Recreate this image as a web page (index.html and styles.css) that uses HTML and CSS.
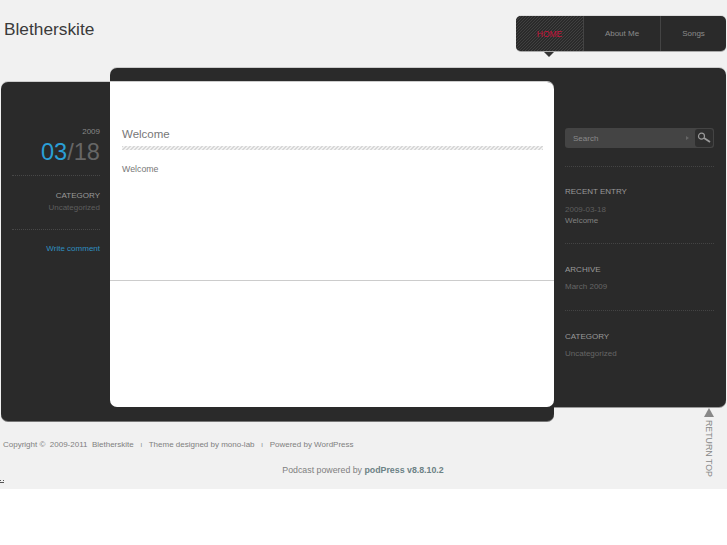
FILE: index.html
```html
<!DOCTYPE html>
<html lang="en">
<head>
    <meta charset="UTF-8">
    <meta name="viewport" content="width=device-width, initial-scale=1.0">
    <title>Bletherskite</title>
    <link rel="stylesheet" href="styles.css">
</head>
<body>
    <div class="page">
        <header class="header">
            <h1 class="site-title">Bletherskite</h1>
            <nav class="nav">
                <a class="nav-item active" href="#">HOME</a>
                <a class="nav-item about" href="#">About Me</a>
                <a class="nav-item songs" href="#">Songs</a>
            </nav>
        </header>
        <div class="stage">
            <div class="back-right"></div>
            <div class="back-left"></div>
            <aside class="meta">
                <div class="meta-date">
                    <p class="year">2009</p>
                    <p class="day"><span class="month">03</span>/18</p>
                </div>
                <div class="meta-cat">
                    <h4>CATEGORY</h4>
                    <a href="#">Uncategorized</a>
                </div>
                <a class="write-comment" href="#">Write comment</a>
            </aside>
            <main class="content">
                <div class="post">
                    <h2 class="post-title">Welcome</h2>
                    <p class="post-body">Welcome</p>
                </div>
            </main>
            <aside class="sidebar">
                <form class="search">
                    <div class="search-box">
                        <span>Search</span>
                        <i class="search-arrow"></i>
                    </div>
                    <button class="search-btn" type="button">
                        <svg width="14" height="12" viewBox="0 0 14 12">
                            <circle cx="4.5" cy="4.2" r="3" fill="none" stroke="#999" stroke-width="1.2"/>
                            <path d="M7 6 L13 10" stroke="#999" stroke-width="1.8"/>
                        </svg>
                    </button>
                </form>
                <section class="widget recent">
                    <h4>RECENT ENTRY</h4>
                    <p class="entry-date">2009-03-18</p>
                    <a class="entry-link" href="#">Welcome</a>
                </section>
                <section class="widget">
                    <h4>ARCHIVE</h4>
                    <a class="muted" href="#">March 2009</a>
                </section>
                <section class="widget">
                    <h4>CATEGORY</h4>
                    <a class="muted" href="#">Uncategorized</a>
                </section>
            </aside>
            <footer class="footer">
                <p class="copyright">Copyright &copy;&nbsp; 2009-2011 &nbsp;Bletherskite <i>I</i> Theme designed by mono-lab <i>I</i> Powered by WordPress</p>
                <p class="podcast">Podcast powered by <a href="#">podPress v8.8.10.2</a></p>
                <svg class="stat-mark" width="5" height="5" viewBox="0 0 5 5"><path d="M0 1h1v1H0zM3 1h1v1H3zM0 3h4v1H0z" fill="#555"/></svg>
            </footer>
            <a class="return-top" href="#"><i></i><span>RETURN TOP</span></a>
        </div>
    </div>
</body>
</html>
```

FILE: styles.css
```css
/* Reset & Basic Styling */
* {
    margin: 0;
    padding: 0;
    box-sizing: border-box;
}
body {
    font-family: 'Liberation Sans', Arial, sans-serif;
    font-size: 8px;
    background: #fff;
    color: #777;
}
a {
    text-decoration: none;
    color: inherit;
}
.page {
    height: 489px;
    background: #f1f1f1;
    overflow: hidden;
}

/* Header */
.header {
    height: 68px;
    display: flex;
    justify-content: space-between;
    align-items: flex-start;
    padding: 16px 1px 0 4px;
}
.site-title {
    font-size: 17.3px;
    font-weight: normal;
    color: #3a3a3a;
    line-height: 26px;
}
.nav {
    width: 210px;
    height: 35px;
    display: flex;
    background: #2a2a2a;
    border-radius: 5px;
    box-shadow: 0 1px 0 #aaa, 0 -1px 0 #ddd;
    position: relative;
}
.nav-item {
    display: flex;
    justify-content: center;
    align-items: center;
    color: #8a8a8a;
    border-left: 1px solid #444;
}
.nav-item.active {
    width: 67px;
    color: #c4143a;
    font-size: 8.5px;
    border-left: none;
    border-radius: 5px 0 0 5px;
    background: repeating-linear-gradient(135deg, #2a2a2a 0, #2a2a2a 1.414px, #404040 1.414px, #404040 2.121px);
}
.nav-item.about {
    width: 77px;
}
.nav-item.songs {
    width: 66px;
}
.nav-item.active::after {
    content: "";
    position: absolute;
    left: 28px;
    top: 36px;
    border: 5px solid transparent;
    border-top: 5px solid #333;
    border-bottom: none;
}

/* Overlapping panels */
.stage {
    display: grid;
    grid-template-columns: 1px 109px 444px 172px 1px;
    grid-template-rows: 14px 325px 14px 68px;
}
.back-right {
    grid-column: 3 / 5;
    grid-row: 1 / 3;
    background: #2a2a2a;
    border-radius: 7px;
    box-shadow: 0 -1px 0 #ccc, 0 1px 0 #999;
}
.back-left {
    grid-column: 2 / 4;
    grid-row: 2 / 4;
    background: #2a2a2a;
    border-radius: 7px;
    box-shadow: 0 -1px 0 #ccc, 0 1px 0 #777;
}
.meta {
    grid-column: 1 / 3;
    grid-row: 2;
    padding: 45px 10px 0 12px;
    text-align: right;
}
.meta-date {
    height: 49px;
    border-bottom: 1px dotted #484848;
}
.year {
    color: #888;
    line-height: 10px;
}
.day {
    color: #666;
    font-size: 23.6px;
    line-height: 26px;
    margin-top: 2px;
}
.month {
    color: #2a9fd6;
}
.meta-cat {
    height: 54px;
    padding-top: 14px;
    border-bottom: 1px dotted #484848;
}
.meta-cat h4, .widget h4 {
    font-size: 8px;
    font-weight: normal;
    color: #999;
    line-height: 11px;
}
.meta-cat a {
    display: block;
    margin-top: 1px;
    color: #5e5e5e;
    line-height: 12px;
}
.write-comment {
    display: block;
    margin-top: 13px;
    color: #2f8fc0;
    line-height: 11px;
}

/* Post */
.content {
    grid-column: 3;
    grid-row: 2;
    background: #fff;
    border-radius: 0 7px 7px 7px;
    z-index: 1;
}
.post {
    height: 199px;
    padding: 45px 11px 0 12px;
    border-bottom: 1px solid #ccc;
}
.post-title {
    font-size: 11.5px;
    font-weight: normal;
    color: #777;
    line-height: 15px;
}
.post-title::after {
    content: "";
    display: block;
    height: 4px;
    margin-top: 4px;
    background: repeating-linear-gradient(135deg, #d8d8d8 0, #d8d8d8 1.414px, #f2f2f2 1.414px, #f2f2f2 2.828px);
}
.post-body {
    margin-top: 14px;
    font-size: 8.8px;
    color: #777;
    line-height: 11px;
}

/* Sidebar */
.sidebar {
    grid-column: 4;
    grid-row: 2;
    padding: 46px 12px 0 11px;
}
.search {
    display: flex;
    justify-content: space-between;
    align-items: center;
    height: 20px;
    background: #444;
    border-radius: 3px;
}
.search-box {
    flex: 1;
    display: flex;
    justify-content: space-between;
    align-items: center;
    padding: 0 6px 0 8px;
    color: #8a8a8a;
}
.search-arrow {
    border: 2px solid transparent;
    border-left: 3px solid #666;
    border-right: none;
}
.search-btn {
    width: 18px;
    height: 18px;
    border: none;
    background: #2e2e2e;
    border-radius: 3px;
    margin-right: 1px;
    display: flex;
    align-items: center;
    justify-content: center;
}
.widget {
    height: 67px;
    padding-top: 20px;
    border-top: 1px dotted #444;
}
.widget.recent {
    height: 77px;
    margin-top: 18px;
    padding-top: 19px;
}
.entry-date {
    margin-top: 7px;
    color: #5e5e5e;
    line-height: 11px;
}
.entry-link {
    display: block;
    color: #808080;
    line-height: 11px;
}
.muted {
    display: block;
    margin-top: 6px;
    color: #666;
    line-height: 11px;
}

/* Footer */
.footer {
    grid-column: 1 / 5;
    grid-row: 4;
    position: relative;
    padding-top: 18px;
}
.copyright {
    padding-left: 3px;
    line-height: 11px;
    color: #808080;
}
.copyright i {
    font-style: normal;
    font-size: 6px;
    margin: 0 4.5px;
}
.podcast {
    margin-top: 14px;
    text-align: center;
    font-size: 8.8px;
    line-height: 11px;
    color: #808080;
}
.podcast a {
    color: #6c8285;
    font-weight: bold;
}
.stat-mark {
    display: block;
    margin-top: 3px;
}
.return-top {
    grid-column: 4 / 5;
    grid-row: 3 / 5;
    justify-self: end;
    margin-right: 12px;
    display: flex;
    flex-direction: column;
    align-items: center;
    width: 10px;
    margin-top: 1px;
    z-index: 1;
}
.return-top i {
    border: 5px solid transparent;
    border-bottom: 9px solid #888;
    border-top: none;
}
.return-top span {
    writing-mode: vertical-rl;
    color: #888;
    font-size: 8.8px;
    margin-top: 3px;
}
```
